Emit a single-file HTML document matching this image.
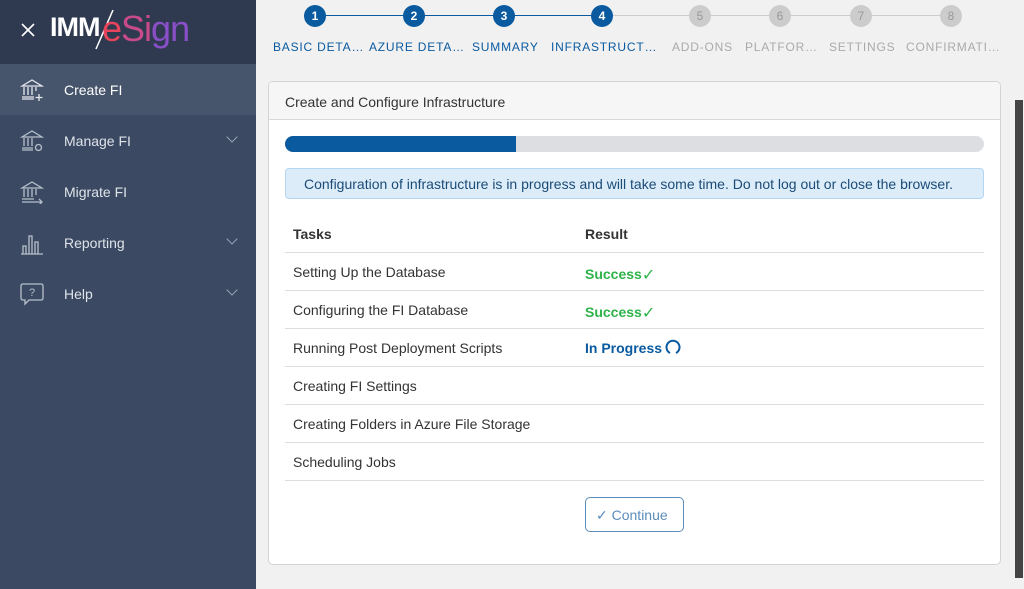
<!DOCTYPE html>
<html><head><meta charset="utf-8"><style>
*{box-sizing:border-box;margin:0;padding:0}
body{width:1024px;height:589px;overflow:hidden;background:#f1f1f1;font-family:"Liberation Sans",sans-serif;position:relative}
.side{position:absolute;left:0;top:0;width:256px;height:589px;background:#3b4a62}
.top{height:64px;background:#2f3a50;position:relative}
.nav{height:51px;display:flex;align-items:center;color:#dfe3ea;font-size:14px;position:relative}
.nav svg{position:absolute;left:20px}
.nav span{position:absolute;left:64px}
.nav .chev{position:absolute;left:228px;width:8px;height:8px;border-right:1px solid #9aa4b4;border-bottom:1px solid #9aa4b4;transform:rotate(45deg);top:18px}
.step{position:absolute;top:5px;width:22px;height:22px;border-radius:50%;color:#fff;font-size:12px;font-weight:bold;text-align:center;line-height:22px}
.lbl{position:absolute;top:40px;font-size:12px;letter-spacing:.8px}
.card{position:absolute;left:268px;top:81px;width:733px;height:484px;background:#fff;border:1px solid #d4d4d4;border-radius:5px;overflow:hidden}
.ch{height:38px;background:#f6f6f6;border-bottom:1px solid #d8d8d8;padding:12px 16px;font-size:14px;color:#333}
.row{position:absolute;left:16px;width:699px;height:38px;border-bottom:1px solid #ddd;font-size:14px;color:#333}
.row .a{position:absolute;left:8px;top:11px}
.row .b{position:absolute;left:300px;top:11px;font-weight:bold}
.ok{color:#2eb34a}
</style></head><body>
<div class="side">
 <div class="top">
  <svg style="position:absolute;left:21px;top:23px" width="14" height="14"><path d="M1 1L13 13M13 1L1 13" stroke="#fff" stroke-width="1.6"/></svg>
  <div style="position:absolute;left:50px;top:12px;font-size:27px;font-weight:bold;color:#fff;letter-spacing:-1px">IMM</div>
  <svg style="position:absolute;left:93px;top:10px" width="22" height="40"><path d="M20 0L3 39" stroke="#fff" stroke-width="1.5"/></svg>
  <div style="position:absolute;left:102px;top:8px;font-size:36px;color:#e8455c;letter-spacing:-1px">e<span style="color:#c84a8a">Si</span><span style="color:#8a4fc8">gn</span></div>
 </div>
 <div class="nav" style="background:#47556c;height:51px"><svg width="24" height="24" viewBox="0 0 24 24" fill="none" stroke="#e5e8ee" stroke-width="1.3"><path d="M2 8L12 2L22 8Z M4 9V17 M8 9V17 M12 9V17 M16 9V13 M2 19H14 M2 21H14 M19 16V23 M15.5 19.5H22.5"/></svg><span style="color:#fff">Create FI</span></div>
 <div class="nav"><svg width="24" height="24" viewBox="0 0 24 24" fill="none" stroke="#b7bfcc" stroke-width="1.3"><path d="M2 8L12 2L22 8Z M4 9V17 M8 9V17 M12 9V17 M2 19H13 M2 21H13"/><circle cx="18.5" cy="18.5" r="3"/></svg><span>Manage FI</span><i class="chev"></i></div>
 <div class="nav"><svg width="24" height="24" viewBox="0 0 24 24" fill="none" stroke="#b7bfcc" stroke-width="1.3"><path d="M2 8L12 2L22 8Z M4 9V17 M8 9V17 M12 9V17 M16 9V15 M2 19H14 M2 22H22 M19 19L22 22L19 25"/></svg><span>Migrate FI</span></div>
 <div class="nav"><svg width="24" height="24" viewBox="0 0 24 24" fill="none" stroke="#b7bfcc" stroke-width="1.3"><path d="M1 23H23 M3 23V15H6V23 M9 23V5H12V23 M15 23V11H18V23"/></svg><span>Reporting</span><i class="chev"></i></div>
 <div class="nav"><svg width="24" height="24" viewBox="0 0 24 24" fill="none" stroke="#b7bfcc" stroke-width="1.3"><path d="M3 2H21Q23 2 23 4V16Q23 18 21 18H9L5 22V18H3Q1 18 1 16V4Q1 2 3 2Z"/><text x="9" y="14" font-size="11" fill="#b7bfcc" stroke="none" font-family="Liberation Sans">?</text></svg><span>Help</span><i class="chev"></i></div>
</div>

<div style="position:absolute;left:326px;top:15px;width:276px;height:1px;background:#0a5aa0"></div>
<div style="position:absolute;left:602px;top:15px;width:350px;height:1px;background:#ccc"></div>
<div class="step" style="left:304px;background:#0a5aa0">1</div>
<div class="step" style="left:403px;background:#0a5aa0">2</div>
<div class="step" style="left:493px;background:#0a5aa0">3</div>
<div class="step" style="left:591px;background:#0a5aa0">4</div>
<div class="step" style="left:689px;background:#ccc;color:#999;font-weight:normal">5</div>
<div class="step" style="left:769px;background:#ccc;color:#999;font-weight:normal">6</div>
<div class="step" style="left:850px;background:#ccc;color:#999;font-weight:normal">7</div>
<div class="step" style="left:940px;background:#ccc;color:#999;font-weight:normal">8</div>
<div class="lbl" style="left:273px;color:#0a5aa0">BASIC DETA…</div>
<div class="lbl" style="left:369px;color:#0a5aa0">AZURE DETA…</div>
<div class="lbl" style="left:472px;color:#0a5aa0">SUMMARY</div>
<div class="lbl" style="left:551px;color:#0a5aa0">INFRASTRUCT…</div>
<div class="lbl" style="left:672px;color:#aaa">ADD-ONS</div>
<div class="lbl" style="left:745px;color:#aaa">PLATFOR…</div>
<div class="lbl" style="left:829px;color:#aaa">SETTINGS</div>
<div class="lbl" style="left:906px;color:#aaa">CONFIRMATI…</div>

<div class="card">
 <div class="ch">Create and Configure Infrastructure</div>
 <div style="position:absolute;left:16px;top:54px;width:699px;height:16px;background:#dcdee2;border-radius:8px;overflow:hidden"><div style="width:231px;height:16px;background:#0a5aa0"></div></div>
 <div style="position:absolute;left:16px;top:86px;width:699px;height:31px;background:#dcecf9;border:1px solid #b5d6f1;border-radius:4px;font-size:14px;color:#1b4c78;padding:7px 18px">Configuration of infrastructure is in progress and will take some time. Do not log out or close the browser.</div>
 <div class="row" style="top:133px"><span class="a" style="font-weight:bold">Tasks</span><span class="b" style="color:#333">Result</span></div>
 <div class="row" style="top:171px"><span class="a">Setting Up the Database</span><span class="b ok">Success<span style="font-weight:normal;font-size:16px;position:relative;top:1px">✓</span></span></div>
 <div class="row" style="top:209px"><span class="a">Configuring the FI Database</span><span class="b ok">Success<span style="font-weight:normal;font-size:16px;position:relative;top:1px">✓</span></span></div>
 <div class="row" style="top:247px"><span class="a">Running Post Deployment Scripts</span><span class="b" style="color:#0a5aa0">In Progress</span><svg style="position:absolute;left:380px;top:10px" width="16" height="16"><path d="M5 14A6.5 6.5 0 1 1 11 14" fill="none" stroke="#0a5aa0" stroke-width="2"/></svg></div>
 <div class="row" style="top:285px"><span class="a">Creating FI Settings</span></div>
 <div class="row" style="top:323px"><span class="a">Creating Folders in Azure File Storage</span></div>
 <div class="row" style="top:361px"><span class="a">Scheduling Jobs</span></div>
 <div style="position:absolute;left:316px;top:415px;width:99px;height:35px;border:1px solid #5b8dbb;border-radius:5px;color:#5b8dbb;font-size:14px;padding:9px 10px">✓ Continue</div>
</div>
<div style="position:absolute;left:1014px;top:0;width:10px;height:589px;background:#f1f1f1"></div>
<div style="position:absolute;left:1015px;top:100px;width:8px;height:478px;background:#444"></div>
</body></html>
